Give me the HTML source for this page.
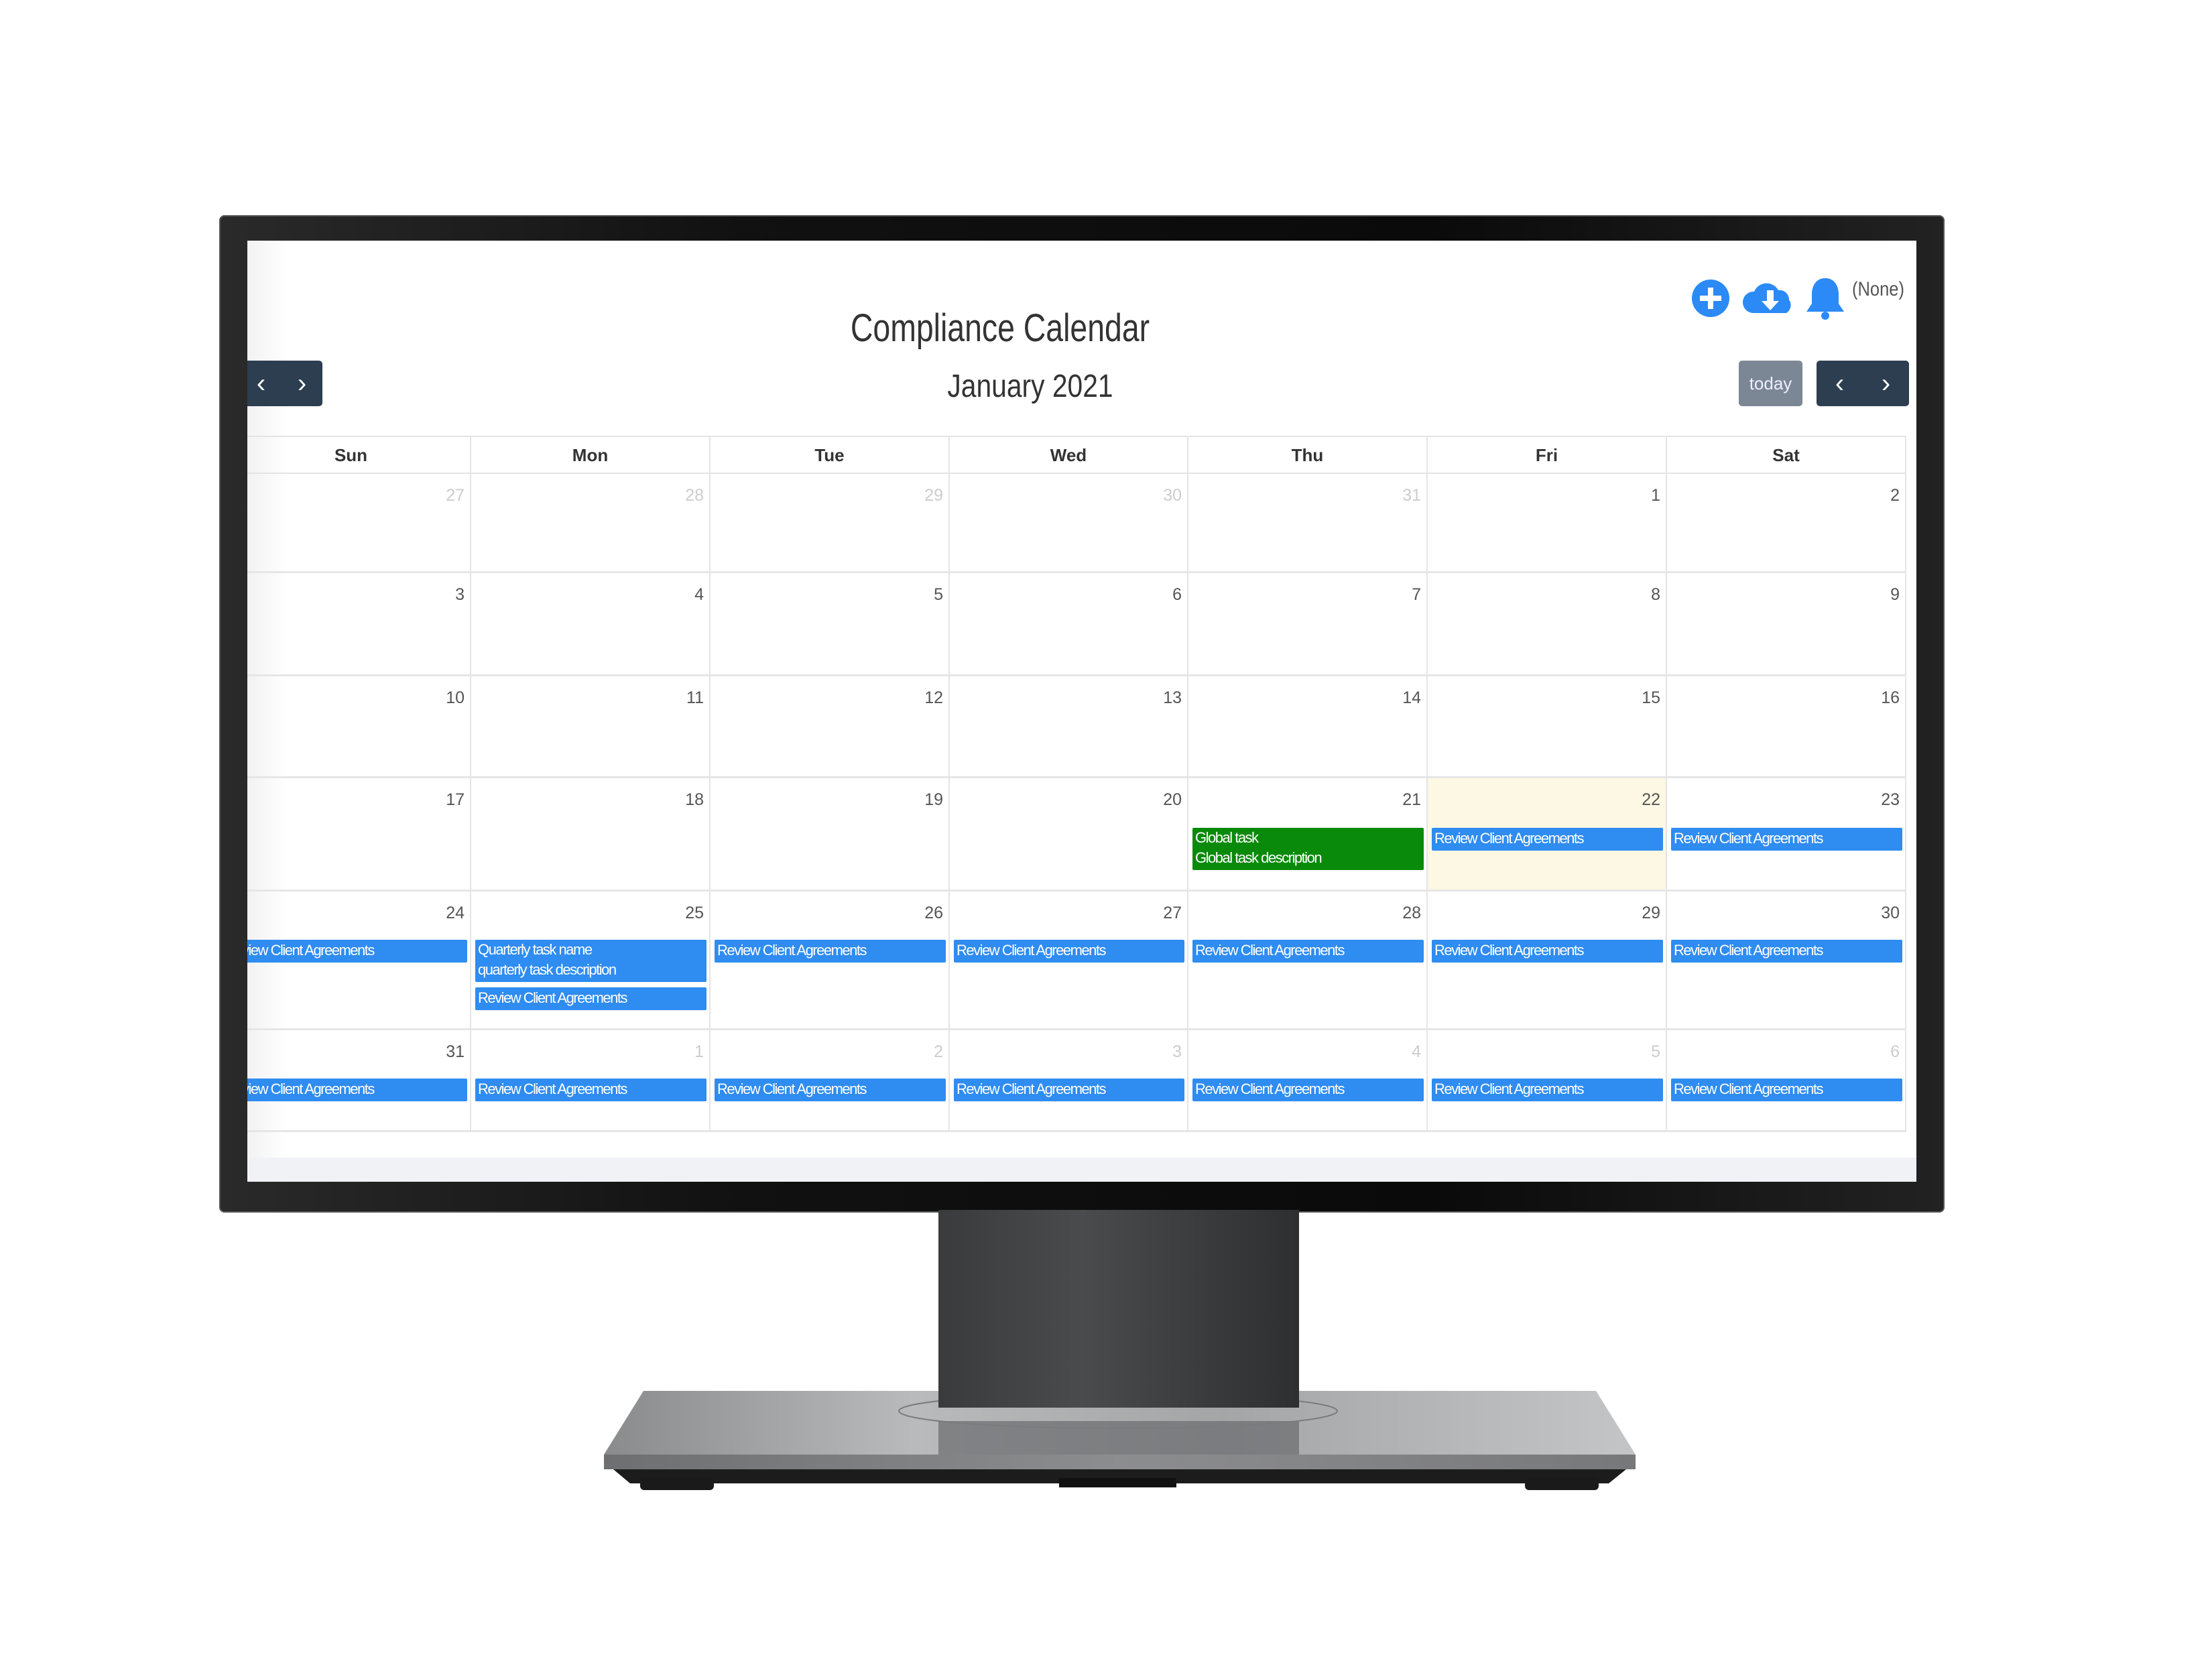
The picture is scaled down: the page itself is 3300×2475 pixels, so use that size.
<!DOCTYPE html>
<html><head><meta charset="utf-8"><style>
*{margin:0;padding:0;box-sizing:border-box}
body{width:3300px;height:2475px;background:#fff;position:relative;overflow:hidden;font-family:"Liberation Sans",sans-serif}
.abs{position:absolute}
#bezel{left:327px;top:321px;width:2574px;height:1488px;background:linear-gradient(90deg,#2a2a2a,#111 30%,#0a0a0a 70%,#222);border-radius:8px;box-shadow:0 0 0 2px #555 inset}
#screen{left:369px;top:359px;width:2490px;height:1404px;background:#fff;overflow:hidden}
#screen::before{content:"";position:absolute;left:0;top:0;width:60px;height:100%;background:linear-gradient(90deg,rgba(0,0,0,.05),rgba(0,0,0,0))}
.bot{left:0;top:1368px;width:100%;height:38px;background:#f0f2f6}
.title{left:0;width:2246px;top:97px;text-align:center;font-size:58px;color:#333;transform:scaleX(.80);transform-origin:1123px 0}
.month{left:0;width:2336px;top:190px;text-align:center;font-size:48px;color:#333;transform:scaleX(.85);transform-origin:1168px 0}
.btn{background:#2c3e50;border-radius:5px;color:#fff;font-size:40px;display:flex;align-items:center;justify-content:space-around}
.today{background:#7b8794;border-radius:5px;color:#eef;font-size:26px;display:flex;align-items:center;justify-content:center}
.hd{height:57px;border:2px solid #e4e4e4;border-left:none;font-weight:bold;font-size:26px;color:#333;text-align:center;line-height:54px}
.c{border-right:2px solid #e4e4e4;border-bottom:3px solid #e6e6e6}
.n{position:absolute;right:8px;top:18px;font-size:25px;color:#555}
.o .n{color:#ccc}
.ev{position:absolute;height:34px;background:#2f8cf0;color:#fff;font-size:22px;letter-spacing:-1.5px;line-height:32px;padding-left:4px;white-space:nowrap;overflow:hidden;border-radius:2px}
.none{left:2394px;top:56px;font-size:30px;color:#555;transform:scaleX(.85);transform-origin:0 0}
</style></head><body>
<div id="bezel" class="abs"></div>
<div id="screen" class="abs">
<div class="abs bot"></div>
<div class="abs title">Compliance Calendar</div>
<div class="abs month">January 2021</div>
<div class="abs btn" style="left:-10px;top:179px;width:122px;height:68px"><span>‹</span><span>›</span></div>
<div class="abs today" style="left:2225px;top:179px;width:95px;height:68px">today</div>
<div class="abs btn" style="left:2341px;top:179px;width:138px;height:68px"><span>‹</span><span>›</span></div>
<svg class="abs" style="left:2150px;top:50px" width="320" height="80" viewBox="0 0 320 80">
<circle cx="33" cy="36" r="28" fill="#2b8af6"/><rect x="29" y="20" width="8" height="32" fill="#fff"/><rect x="17" y="32" width="32" height="8" fill="#fff"/>
<path d="M96 58 a16 16 0 0 1 2 -32 a20 20 0 0 1 36 -2 a14 14 0 0 1 16 14 a14 14 0 0 1 -4 20 z" fill="#2b8af6"/>
<path d="M117 24 h10 v16 h8 l-13 14 l-13 -14 h8 z" fill="#fff"/>
<path d="M204 6 c-14 0 -20 12 -20 24 v14 l-8 12 h56 l-8 -12 v-14 c0 -12 -6 -24 -20 -24z" fill="#2b8af6"/><circle cx="204" cy="62" r="6" fill="#2b8af6"/>
</svg>
<div class="abs none">(None)</div>
<div class="abs hd" style="left:-23px;top:291px;width:357px">Sun</div>
<div class="abs hd" style="left:334px;top:291px;width:357px">Mon</div>
<div class="abs hd" style="left:691px;top:291px;width:357px">Tue</div>
<div class="abs hd" style="left:1048px;top:291px;width:356px">Wed</div>
<div class="abs hd" style="left:1404px;top:291px;width:357px">Thu</div>
<div class="abs hd" style="left:1761px;top:291px;width:357px">Fri</div>
<div class="abs hd" style="left:2118px;top:291px;width:357px">Sat</div>
<div class="abs c o" style="left:-23px;top:348px;width:357px;height:148px"><span class="n">27</span></div>
<div class="abs c o" style="left:334px;top:348px;width:357px;height:148px"><span class="n">28</span></div>
<div class="abs c o" style="left:691px;top:348px;width:357px;height:148px"><span class="n">29</span></div>
<div class="abs c o" style="left:1048px;top:348px;width:356px;height:148px"><span class="n">30</span></div>
<div class="abs c o" style="left:1404px;top:348px;width:357px;height:148px"><span class="n">31</span></div>
<div class="abs c" style="left:1761px;top:348px;width:357px;height:148px"><span class="n">1</span></div>
<div class="abs c" style="left:2118px;top:348px;width:357px;height:148px"><span class="n">2</span></div>
<div class="abs c" style="left:-23px;top:496px;width:357px;height:154px"><span class="n">3</span></div>
<div class="abs c" style="left:334px;top:496px;width:357px;height:154px"><span class="n">4</span></div>
<div class="abs c" style="left:691px;top:496px;width:357px;height:154px"><span class="n">5</span></div>
<div class="abs c" style="left:1048px;top:496px;width:356px;height:154px"><span class="n">6</span></div>
<div class="abs c" style="left:1404px;top:496px;width:357px;height:154px"><span class="n">7</span></div>
<div class="abs c" style="left:1761px;top:496px;width:357px;height:154px"><span class="n">8</span></div>
<div class="abs c" style="left:2118px;top:496px;width:357px;height:154px"><span class="n">9</span></div>
<div class="abs c" style="left:-23px;top:650px;width:357px;height:152px"><span class="n">10</span></div>
<div class="abs c" style="left:334px;top:650px;width:357px;height:152px"><span class="n">11</span></div>
<div class="abs c" style="left:691px;top:650px;width:357px;height:152px"><span class="n">12</span></div>
<div class="abs c" style="left:1048px;top:650px;width:356px;height:152px"><span class="n">13</span></div>
<div class="abs c" style="left:1404px;top:650px;width:357px;height:152px"><span class="n">14</span></div>
<div class="abs c" style="left:1761px;top:650px;width:357px;height:152px"><span class="n">15</span></div>
<div class="abs c" style="left:2118px;top:650px;width:357px;height:152px"><span class="n">16</span></div>
<div class="abs c" style="left:-23px;top:802px;width:357px;height:169px"><span class="n">17</span></div>
<div class="abs c" style="left:334px;top:802px;width:357px;height:169px"><span class="n">18</span></div>
<div class="abs c" style="left:691px;top:802px;width:357px;height:169px"><span class="n">19</span></div>
<div class="abs c" style="left:1048px;top:802px;width:356px;height:169px"><span class="n">20</span></div>
<div class="abs c" style="left:1404px;top:802px;width:357px;height:169px"><span class="n">21</span></div>
<div class="abs c" style="left:1761px;top:802px;width:357px;height:169px;background:#fcf8e3"><span class="n">22</span></div>
<div class="abs c" style="left:2118px;top:802px;width:357px;height:169px"><span class="n">23</span></div>
<div class="abs c" style="left:-23px;top:971px;width:357px;height:207px"><span class="n">24</span></div>
<div class="abs c" style="left:334px;top:971px;width:357px;height:207px"><span class="n">25</span></div>
<div class="abs c" style="left:691px;top:971px;width:357px;height:207px"><span class="n">26</span></div>
<div class="abs c" style="left:1048px;top:971px;width:356px;height:207px"><span class="n">27</span></div>
<div class="abs c" style="left:1404px;top:971px;width:357px;height:207px"><span class="n">28</span></div>
<div class="abs c" style="left:1761px;top:971px;width:357px;height:207px"><span class="n">29</span></div>
<div class="abs c" style="left:2118px;top:971px;width:357px;height:207px"><span class="n">30</span></div>
<div class="abs c" style="left:-23px;top:1178px;width:357px;height:152px"><span class="n">31</span></div>
<div class="abs c o" style="left:334px;top:1178px;width:357px;height:152px"><span class="n">1</span></div>
<div class="abs c o" style="left:691px;top:1178px;width:357px;height:152px"><span class="n">2</span></div>
<div class="abs c o" style="left:1048px;top:1178px;width:356px;height:152px"><span class="n">3</span></div>
<div class="abs c o" style="left:1404px;top:1178px;width:357px;height:152px"><span class="n">4</span></div>
<div class="abs c o" style="left:1761px;top:1178px;width:357px;height:152px"><span class="n">5</span></div>
<div class="abs c o" style="left:2118px;top:1178px;width:357px;height:152px"><span class="n">6</span></div>
<div class="ev" style="left:1410px;top:876px;width:345px;height:63px;background:#0a8a0a;line-height:30px">Global task<br>Global task description</div>
<div class="ev" style="left:1767px;top:876px;width:345px">Review Client Agreements</div>
<div class="ev" style="left:2124px;top:876px;width:345px">Review Client Agreements</div>
<div class="ev" style="left:-8px;top:1043px;width:336px;padding-left:0">view Client Agreements</div>
<div class="ev" style="left:340px;top:1043px;width:345px;height:63px;line-height:30px">Quarterly task name<br>quarterly task description</div>
<div class="ev" style="left:340px;top:1114px;width:345px">Review Client Agreements</div>
<div class="ev" style="left:697px;top:1043px;width:345px">Review Client Agreements</div>
<div class="ev" style="left:1054px;top:1043px;width:344px">Review Client Agreements</div>
<div class="ev" style="left:1410px;top:1043px;width:345px">Review Client Agreements</div>
<div class="ev" style="left:1767px;top:1043px;width:345px">Review Client Agreements</div>
<div class="ev" style="left:2124px;top:1043px;width:345px">Review Client Agreements</div>
<div class="ev" style="left:-8px;top:1250px;width:336px;padding-left:0">view Client Agreements</div>
<div class="ev" style="left:340px;top:1250px;width:345px">Review Client Agreements</div>
<div class="ev" style="left:697px;top:1250px;width:345px">Review Client Agreements</div>
<div class="ev" style="left:1054px;top:1250px;width:344px">Review Client Agreements</div>
<div class="ev" style="left:1410px;top:1250px;width:345px">Review Client Agreements</div>
<div class="ev" style="left:1767px;top:1250px;width:345px">Review Client Agreements</div>
<div class="ev" style="left:2124px;top:1250px;width:345px">Review Client Agreements</div>
</div>
<svg class="abs" style="left:0;top:0" width="3300" height="2475">
<defs>
<linearGradient id="nk" x1="0" x2="1"><stop offset="0" stop-color="#3a3b3c"/><stop offset=".4" stop-color="#4a4b4c"/><stop offset="1" stop-color="#2e2f30"/></linearGradient>
<linearGradient id="bs" x1="0" x2="1"><stop offset="0" stop-color="#8a8b8d"/><stop offset=".3" stop-color="#b9babc"/><stop offset=".6" stop-color="#a4a5a7"/><stop offset="1" stop-color="#c4c5c7"/></linearGradient>
<linearGradient id="fr" x1="0" x2="1"><stop offset="0" stop-color="#6e6f71"/><stop offset=".5" stop-color="#8c8d8f"/><stop offset="1" stop-color="#77787a"/></linearGradient>
</defs>
<path d="M960 2075 L2381 2075 L2440 2170 L901 2170 Z" fill="url(#bs)"/>
<path d="M1400 2120 L1938 2120 L1938 2170 L1400 2170Z" fill="#6a6b6d" opacity=".7"/>
<ellipse cx="1668" cy="2105" rx="327" ry="26" fill="none" stroke="#7a7b7d" stroke-width="2"/>
<rect x="1400" y="1805" width="538" height="295" fill="url(#nk)"/>
<path d="M901 2170 L2440 2170 L2440 2192 L901 2192Z" fill="url(#fr)"/>
<path d="M915 2192 L2426 2192 L2400 2213 L940 2213Z" fill="#1c1c1c"/>
<rect x="955" y="2205" width="110" height="18" rx="6" fill="#1a1a1a"/>
<rect x="2275" y="2205" width="110" height="18" rx="6" fill="#1a1a1a"/>
<rect x="1580" y="2205" width="175" height="14" fill="#111"/>
</svg>
</body></html>
